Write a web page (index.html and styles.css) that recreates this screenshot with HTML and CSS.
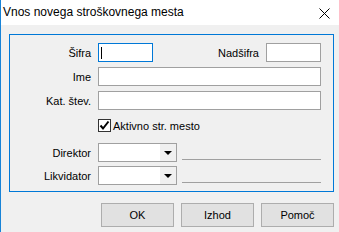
FILE: index.html
```
<!DOCTYPE html>
<html lang="sl">
<head>
    <meta charset="UTF-8">
    <meta name="viewport" content="width=device-width, initial-scale=1.0">
    <title>Vnos novega stroškovnega mesta</title>
    <link rel="stylesheet" href="styles.css">
</head>
<body>
    <div class="window">
        <div class="titlebar">
            <span class="title">Vnos novega stroškovnega mesta</span>
            <svg class="close" width="11" height="11" viewBox="0 0 11 11">
                <path d="M0.5 0.5 L10.5 10.5 M10.5 0.5 L0.5 10.5" stroke="#000" stroke-width="1" fill="none"/>
            </svg>
        </div>
        <div class="content">
            <div class="frame">
                <div class="row">
                    <span class="lbl">Šifra</span>
                    <div class="edit short focus"><span class="caret"></span></div>
                    <span class="lbl2">Nadšifra</span>
                    <div class="edit short"></div>
                </div>
                <div class="row gap5">
                    <span class="lbl">Ime</span>
                    <div class="edit wide"></div>
                </div>
                <div class="row gap5">
                    <span class="lbl">Kat. štev.</span>
                    <div class="edit wide"></div>
                </div>
                <div class="row check-row">
                    <span class="box">
                        <svg width="11" height="11" viewBox="0 0 11 11">
                            <path d="M1.5 5.5 L4 8.5 L9.5 1.5" stroke="#000" stroke-width="2" fill="none"/>
                        </svg>
                    </span>
                    <span class="check-text">Aktivno str. mesto</span>
                </div>
                <div class="row combo-row first">
                    <span class="lbl">Direktor</span>
                    <div class="combo"><span class="drop"><span class="arrow"></span></span></div>
                    <span class="line"></span>
                </div>
                <div class="row combo-row">
                    <span class="lbl">Likvidator</span>
                    <div class="combo"><span class="drop"><span class="arrow"></span></span></div>
                    <span class="line"></span>
                </div>
            </div>
            <div class="buttons">
                <button>OK</button>
                <button>Izhod</button>
                <button>Pomoč</button>
            </div>
        </div>
    </div>
</body>
</html>
```

FILE: styles.css
```
body {
    margin: 0;
    background-color: #f0f0f0;
    font-family: "Liberation Sans", Arial, sans-serif;
    font-size: 11px;
    color: #000;
}
.window {
    width: 339px;
    height: 232px;
    box-sizing: border-box;
    border-left: 1px solid #1883d7;
    background-color: #f0f0f0;
    overflow: hidden;
}
.titlebar {
    height: 25px;
    background-color: #fff;
    display: flex;
    align-items: center;
    justify-content: space-between;
    padding-left: 2px;
    padding-right: 9px;
}
.title {
    font-size: 12px;
    line-height: 25px;
}
.close {
    display: block;
    margin-top: 2px;
}
.content {
    padding-left: 8px;
    padding-top: 9px;
}
.frame {
    width: 325px;
    height: 158px;
    box-sizing: border-box;
    border: 1px solid #0078d7;
    padding-top: 8px;
}
.row {
    display: flex;
    align-items: center;
    height: 19px;
    padding-right: 12px;
}
.gap5 {
    margin-top: 5px;
}
.lbl {
    width: 81px;
    margin-right: 7px;
    text-align: right;
    white-space: nowrap;
}
.lbl2 {
    margin-left: auto;
    margin-right: 7px;
}
.edit {
    height: 19px;
    box-sizing: border-box;
    border: 1px solid #a0a0a0;
    background-color: #fff;
    display: flex;
    align-items: center;
}
.edit.short {
    width: 55px;
}
.edit.wide {
    flex: 1;
}
.edit.focus {
    border-color: #0078d7;
}
.caret {
    width: 1px;
    height: 12px;
    margin-left: 2px;
    background-color: #000;
}
.check-row {
    height: 13px;
    margin-top: 9px;
    padding-left: 88px;
}
.box {
    width: 13px;
    height: 13px;
    box-sizing: border-box;
    border: 1px solid #333;
    background-color: #fff;
    display: flex;
    align-items: center;
    justify-content: center;
}
.box svg {
    display: block;
}
.check-text {
    margin-left: 2px;
}
.combo-row {
    margin-top: 4px;
}
.combo-row.first {
    margin-top: 11px;
}
.combo {
    width: 79px;
    height: 19px;
    box-sizing: border-box;
    border: 1px solid #a0a0a0;
    background-color: #fff;
    display: flex;
    justify-content: flex-end;
}
.drop {
    width: 16px;
    background-color: #f0f0f0;
    display: flex;
    align-items: center;
    justify-content: center;
}
.arrow {
    width: 0;
    height: 0;
    border-left: 4px solid transparent;
    border-right: 4px solid transparent;
    border-top: 4px solid #000;
    margin-top: 1px;
}
.line {
    flex: 1;
    height: 1px;
    margin-left: 5px;
    align-self: flex-end;
    margin-bottom: 2px;
    background-color: #a0a0a0;
}
.buttons {
    width: 325px;
    margin-top: 11px;
    display: flex;
    justify-content: flex-end;
    gap: 7px;
}
button {
    width: 73px;
    height: 24px;
    margin: 0;
    padding: 0;
    border: 1px solid #adadad;
    background-color: #e1e1e1;
    font-family: "Liberation Sans", Arial, sans-serif;
    font-size: 11px;
    color: #000;
}
```
